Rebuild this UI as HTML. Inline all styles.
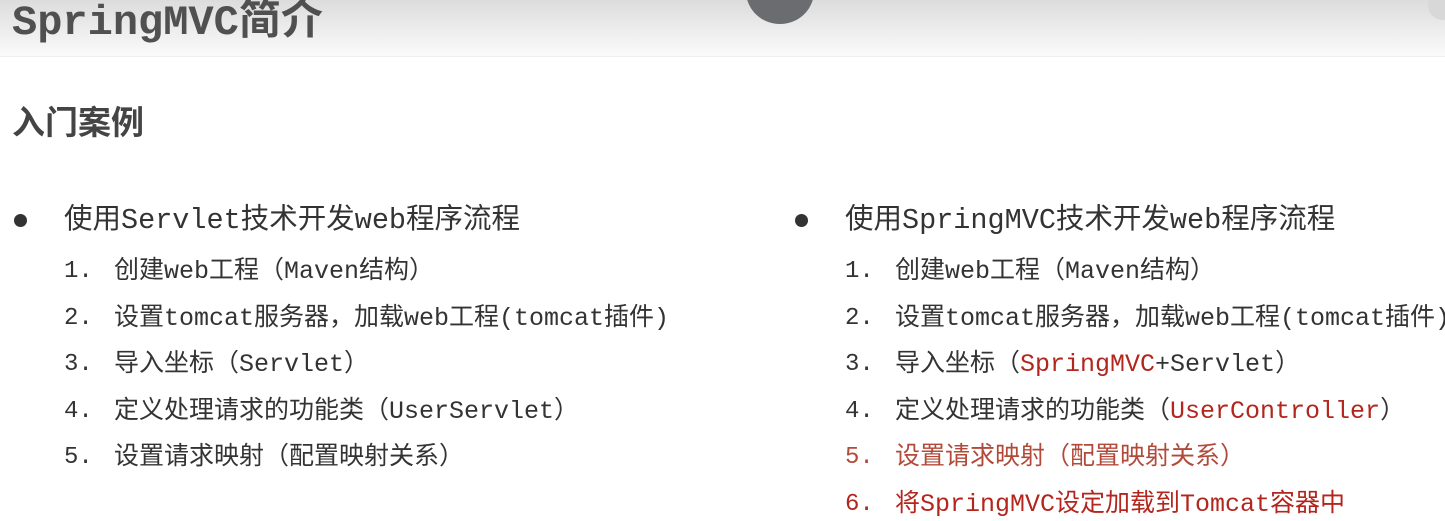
<!DOCTYPE html>
<html><head><meta charset="utf-8"><style>
*{margin:0;padding:0}
body{width:1445px;height:521px;overflow:hidden;background:#fff;position:relative;font-family:"Liberation Mono","Noto Sans CJK SC",monospace;color:#333}
.hdr{position:absolute;left:0;top:0;width:1445px;height:56px;background:linear-gradient(#dcdcdc,#fbfbfb);border-bottom:1px solid #eee}
.t{position:absolute;left:12px;top:-5px;font-size:42px;font-weight:bold;color:#505050;white-space:nowrap;line-height:56px}
.circ{position:absolute;left:746px;top:-42px;width:68px;height:66px;border-radius:50%;background:#6b6c70}
.circ2{position:absolute;left:1428px;top:-10px;width:30px;height:30px;border-radius:50%;background:#d8d8d8}
.h2{position:absolute;left:12px;top:100px;font-family:"Noto Sans CJK SC",sans-serif;font-size:33px;font-weight:bold;color:#444;line-height:40px}
.b{position:absolute;font-size:28.5px;line-height:36px;white-space:nowrap;color:#333}
.dot{position:absolute;width:13px;height:13px;border-radius:50%;background:#333}
.i{position:absolute;font-size:25px;line-height:32px;white-space:nowrap;color:#333}
.n{position:absolute;font-size:24px;line-height:32px;color:#333}
.r{color:#b3261e}.r2{color:#b24a3a}
</style></head><body>
<div class="hdr"></div>
<div class="t">SpringMVC简介</div>
<div class="circ"></div><div class="circ2"></div>
<div class="h2">入门案例</div>

<div class="dot" style="left:14px;top:214px"></div>
<div class="b" style="left:64px;top:203px">使用Servlet技术开发web程序流程</div>
<div class="n" style="left:64px;top:256px">1.</div><div class="i" style="left:114px;top:256px">创建web工程（Maven结构）</div>
<div class="n" style="left:64px;top:303px">2.</div><div class="i" style="left:114px;top:303px">设置tomcat服务器，加载web工程(tomcat插件)</div>
<div class="n" style="left:64px;top:349px">3.</div><div class="i" style="left:114px;top:349px">导入坐标（Servlet）</div>
<div class="n" style="left:64px;top:396px">4.</div><div class="i" style="left:114px;top:396px">定义处理请求的功能类（UserServlet）</div>
<div class="n" style="left:64px;top:442px">5.</div><div class="i" style="left:114px;top:442px">设置请求映射（配置映射关系）</div>

<div class="dot" style="left:795px;top:214px"></div>
<div class="b" style="left:845px;top:203px">使用SpringMVC技术开发web程序流程</div>
<div class="n" style="left:845px;top:256px">1.</div><div class="i" style="left:895px;top:256px">创建web工程（Maven结构）</div>
<div class="n" style="left:845px;top:303px">2.</div><div class="i" style="left:895px;top:303px">设置tomcat服务器，加载web工程(tomcat插件)</div>
<div class="n" style="left:845px;top:349px">3.</div><div class="i" style="left:895px;top:349px">导入坐标（<span class="r">SpringMVC</span>+Servlet）</div>
<div class="n" style="left:845px;top:396px">4.</div><div class="i" style="left:895px;top:396px">定义处理请求的功能类（<span class="r">UserController</span>）</div>
<div class="n r2" style="left:845px;top:442px">5.</div><div class="i r2" style="left:895px;top:442px">设置请求映射（配置映射关系）</div>
<div class="n r" style="left:845px;top:489px">6.</div><div class="i r" style="left:895px;top:489px">将SpringMVC设定加载到Tomcat容器中</div>
</body></html>
